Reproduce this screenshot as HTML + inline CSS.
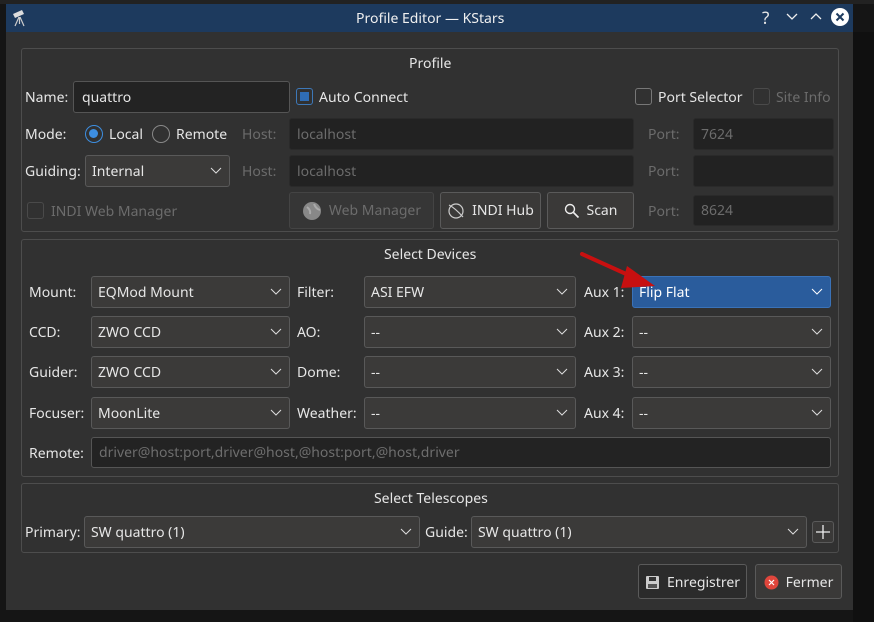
<!DOCTYPE html><html><head><meta charset="utf-8"><style>
body{margin:0;width:874px;height:622px;background:#151515;position:relative;overflow:hidden;font-family:"Noto Sans","Liberation Sans",sans-serif;font-size:14px;color:#e6e6e6}
.a{position:absolute;box-sizing:border-box}
.t{position:absolute;line-height:18px;white-space:nowrap;margin-top:1px}
.dim{color:#6c6c6c}
.grp{position:absolute;box-sizing:border-box;border:1px solid #4d4d4d;border-radius:3px}
.in{position:absolute;box-sizing:border-box;background:#232323;border:1px solid #555;border-radius:3px;padding:0 8px;display:flex;align-items:center}
.ind{position:absolute;box-sizing:border-box;background:#222;border:1px solid #2a2a2a;border-radius:3px;padding:0 7px;display:flex;align-items:center;color:#6c6c6c}
.cb{position:absolute;box-sizing:border-box;background:#3b3a39;border:1px solid #595959;border-radius:3px;padding:0 6px;display:flex;align-items:center}
.cb svg{position:absolute;right:7px;top:50%;margin-top:-4px}
.btn{position:absolute;box-sizing:border-box;background:#3a3938;border:1px solid #5a5a5a;border-radius:3px;display:flex;align-items:center;justify-content:center;gap:7px}
.chk{position:absolute;box-sizing:border-box;width:17px;height:17px;border:1px solid #777;border-radius:3px}
</style></head><body>
<div class="a" style="left:0;top:0;width:874px;height:4px;background:#222"></div>
<div class="a" style="left:853px;top:32px;width:21px;height:590px;background:#101010"></div>
<div class="a" style="left:6px;top:4px;width:847px;height:606px;background:#313131"></div>
<div class="a" style="left:6px;top:4px;width:847px;height:28px;background:#1d3a5e"></div>
<svg class="a" style="left:11px;top:8px" width="18" height="20"><path d="M2 6l9-4 2 4-9 4z" fill="#ddd"/><path d="M8 9l-4 9M9 9l4 9M8.5 9v7" stroke="#ccc" stroke-width="1.2"/></svg>
<div class="t" style="left:356px;top:9px;color:#f0f0f0">Profile Editor — KStars</div>
<div class="t" style="left:762px;top:8px;font-size:17px">?</div>
<svg class="a" style="left:786px;top:13px" width="12" height="8"><path d="M1 1l5 5 5-5" stroke="#eee" fill="none" stroke-width="1.3"/></svg>
<svg class="a" style="left:810px;top:12px" width="12" height="8"><path d="M1 7l5-5 5 5" stroke="#eee" fill="none" stroke-width="1.3"/></svg>
<svg class="a" style="left:831px;top:8px" width="18" height="18"><circle cx="9" cy="9" r="9" fill="#fff"/><path d="M5.5 5.5l7 7M12.5 5.5l-7 7" stroke="#1d3a5e" stroke-width="2"/></svg>

<div class="grp" style="left:21px;top:48px;width:818px;height:184px"></div>
<div class="t" style="left:409px;top:54px">Profile</div>
<div class="t" style="left:25px;top:88px">Name:</div>
<div class="in" style="left:73px;top:81px;width:217px;height:32px">quattro</div>
<div class="chk" style="left:296px;top:88px;border-color:#3d78b8;background:#313131"><div class="a" style="left:3px;top:3px;width:9px;height:9px;background:#2f6db5"></div></div>
<div class="t" style="left:319px;top:88px">Auto Connect</div>
<div class="chk" style="left:635px;top:88px"></div>
<div class="t" style="left:658px;top:88px">Port Selector</div>
<div class="chk" style="left:753px;top:88px;border-color:#4a4a4a"></div>
<div class="t dim" style="left:776px;top:88px">Site Info</div>

<div class="t" style="left:25px;top:125px">Mode:</div>
<div class="a" style="left:85px;top:125px;width:18px;height:18px;border:1.5px solid #3d8ee0;border-radius:50%"><div class="a" style="left:3px;top:3px;width:9px;height:9px;border-radius:50%;background:#3d8ee0"></div></div>
<div class="t" style="left:109px;top:125px">Local</div>
<div class="a" style="left:152px;top:125px;width:18px;height:18px;border:1.3px solid #888;border-radius:50%"></div>
<div class="t" style="left:176px;top:125px">Remote</div>
<div class="t dim" style="left:242px;top:125px">Host:</div>
<div class="ind" style="left:289px;top:118px;width:345px;height:32px">localhost</div>
<div class="t dim" style="left:648px;top:125px">Port:</div>
<div class="ind" style="left:693px;top:118px;width:141px;height:32px">7624</div>

<div class="t" style="left:25px;top:162px">Guiding:</div>
<div class="cb" style="left:85px;top:155px;width:145px;height:32px">Internal<svg width="12" height="8"><path d="M1 1l5 5 5-5" stroke="#ddd" fill="none"/></svg></div>
<div class="t dim" style="left:242px;top:162px">Host:</div>
<div class="ind" style="left:289px;top:155px;width:345px;height:32px">localhost</div>
<div class="t dim" style="left:648px;top:162px">Port:</div>
<div class="ind" style="left:693px;top:155px;width:141px;height:32px"></div>

<div class="chk" style="left:27px;top:202px;border-color:#4a4a4a"></div>
<div class="t dim" style="left:51px;top:202px">INDI Web Manager</div>
<div class="btn dim" style="left:289px;top:192px;width:145px;height:37px;background:#363636;border-color:#444"><svg width="20" height="20"><circle cx="10" cy="10" r="9" fill="#888"/><path d="M5 6q4 3 3 7M12 3q2 5 6 6" stroke="#aaa" stroke-width="2" fill="none"/></svg>Web Manager</div>
<div class="btn" style="left:440px;top:192px;width:101px;height:37px"><svg width="18" height="18"><circle cx="9" cy="9" r="7" stroke="#ccc" fill="none" stroke-width="1.2"/><path d="M2 3q6 3 14 12" stroke="#ccc" fill="none" stroke-width="1.2"/></svg>INDI Hub</div>
<div class="btn" style="left:547px;top:192px;width:87px;height:37px"><svg width="16" height="16"><circle cx="6" cy="6" r="4.5" stroke="#eee" fill="none" stroke-width="1.4"/><path d="M9.5 9.5l5 5" stroke="#eee" stroke-width="1.6"/></svg>Scan</div>
<div class="t dim" style="left:648px;top:202px">Port:</div>
<div class="ind" style="left:693px;top:195px;width:141px;height:31px">8624</div>

<div class="grp" style="left:21px;top:239px;width:818px;height:238px"></div>
<div class="t" style="left:384px;top:245px">Select Devices</div>
<div class="t" style="left:29px;top:283px">Mount:</div>
<div class="t" style="left:29px;top:323px">CCD:</div>
<div class="t" style="left:29px;top:363px">Guider:</div>
<div class="t" style="left:29px;top:404px">Focuser:</div>
<div class="t" style="left:29px;top:444px">Remote:</div>
<div class="cb" style="left:91px;top:276px;width:199px;height:32px">EQMod Mount<svg width="12" height="8"><path d="M1 1l5 5 5-5" stroke="#ddd" fill="none"/></svg></div>
<div class="cb" style="left:91px;top:316px;width:199px;height:32px">ZWO CCD<svg width="12" height="8"><path d="M1 1l5 5 5-5" stroke="#ddd" fill="none"/></svg></div>
<div class="cb" style="left:91px;top:356px;width:199px;height:32px">ZWO CCD<svg width="12" height="8"><path d="M1 1l5 5 5-5" stroke="#ddd" fill="none"/></svg></div>
<div class="cb" style="left:91px;top:397px;width:199px;height:32px">MoonLite<svg width="12" height="8"><path d="M1 1l5 5 5-5" stroke="#ddd" fill="none"/></svg></div>
<div class="t" style="left:297px;top:283px">Filter:</div>
<div class="t" style="left:297px;top:323px">AO:</div>
<div class="t" style="left:297px;top:363px">Dome:</div>
<div class="t" style="left:297px;top:404px">Weather:</div>
<div class="cb" style="left:364px;top:276px;width:212px;height:32px">ASI EFW<svg width="12" height="8"><path d="M1 1l5 5 5-5" stroke="#ddd" fill="none"/></svg></div>
<div class="cb" style="left:364px;top:316px;width:212px;height:32px">--<svg width="12" height="8"><path d="M1 1l5 5 5-5" stroke="#ddd" fill="none"/></svg></div>
<div class="cb" style="left:364px;top:356px;width:212px;height:32px">--<svg width="12" height="8"><path d="M1 1l5 5 5-5" stroke="#ddd" fill="none"/></svg></div>
<div class="cb" style="left:364px;top:397px;width:212px;height:32px">--<svg width="12" height="8"><path d="M1 1l5 5 5-5" stroke="#ddd" fill="none"/></svg></div>
<div class="t" style="left:584px;top:283px">Aux 1:</div>
<div class="t" style="left:584px;top:323px">Aux 2:</div>
<div class="t" style="left:584px;top:363px">Aux 3:</div>
<div class="t" style="left:584px;top:404px">Aux 4:</div>
<div class="cb" style="left:632px;top:276px;width:199px;height:32px;background:#2a5c9c;border-color:#3a72b8;color:#fff">Flip Flat<svg width="12" height="8"><path d="M1 1l5 5 5-5" stroke="#fff" fill="none"/></svg></div>
<div class="cb" style="left:632px;top:316px;width:199px;height:32px">--<svg width="12" height="8"><path d="M1 1l5 5 5-5" stroke="#ddd" fill="none"/></svg></div>
<div class="cb" style="left:632px;top:356px;width:199px;height:32px">--<svg width="12" height="8"><path d="M1 1l5 5 5-5" stroke="#ddd" fill="none"/></svg></div>
<div class="cb" style="left:632px;top:397px;width:199px;height:32px">--<svg width="12" height="8"><path d="M1 1l5 5 5-5" stroke="#ddd" fill="none"/></svg></div>
<div class="in" style="left:91px;top:437px;width:740px;height:31px;color:#6e6e6e;padding-left:7px">driver@host:port,driver@host,@host:port,@host,driver</div>
<svg class="a" style="left:575px;top:248px" width="85" height="45"><path d="M7 6L60 30" stroke="#c81010" stroke-width="4" stroke-linecap="round"/><path d="M52 18L80 38L46 40Z" fill="#c81010"/></svg>

<div class="grp" style="left:21px;top:483px;width:818px;height:70px"></div>
<div class="t" style="left:374px;top:489px">Select Telescopes</div>
<div class="t" style="left:25px;top:523px">Primary:</div>
<div class="cb" style="left:84px;top:516px;width:336px;height:32px">SW quattro (1)<svg width="12" height="8"><path d="M1 1l5 5 5-5" stroke="#ddd" fill="none"/></svg></div>
<div class="t" style="left:425px;top:523px">Guide:</div>
<div class="cb" style="left:471px;top:516px;width:336px;height:32px">SW quattro (1)<svg width="12" height="8"><path d="M1 1l5 5 5-5" stroke="#ddd" fill="none"/></svg></div>
<div class="btn" style="left:812px;top:521px;width:22px;height:22px"><svg width="16" height="16"><path d="M8 1v14M1 8h14" stroke="#eee" stroke-width="1.3"/></svg></div>

<div class="btn" style="left:638px;top:564px;width:109px;height:35px;background:#2b2b2b;padding-top:2px"><svg width="15" height="15"><rect x="1" y="1" width="13" height="13" rx="1" fill="#ccc"/><rect x="4" y="2" width="7" height="4" fill="#333"/><rect x="3" y="9" width="9" height="4" fill="#555"/></svg>Enregistrer</div>
<div class="btn" style="left:755px;top:564px;width:87px;height:35px;padding-top:2px"><svg width="15" height="15"><circle cx="7.5" cy="7.5" r="7" fill="#e0463c"/><path d="M5 5l5 5M10 5l-5 5" stroke="#fff" stroke-width="1.2"/></svg>Fermer</div>
</body></html>
